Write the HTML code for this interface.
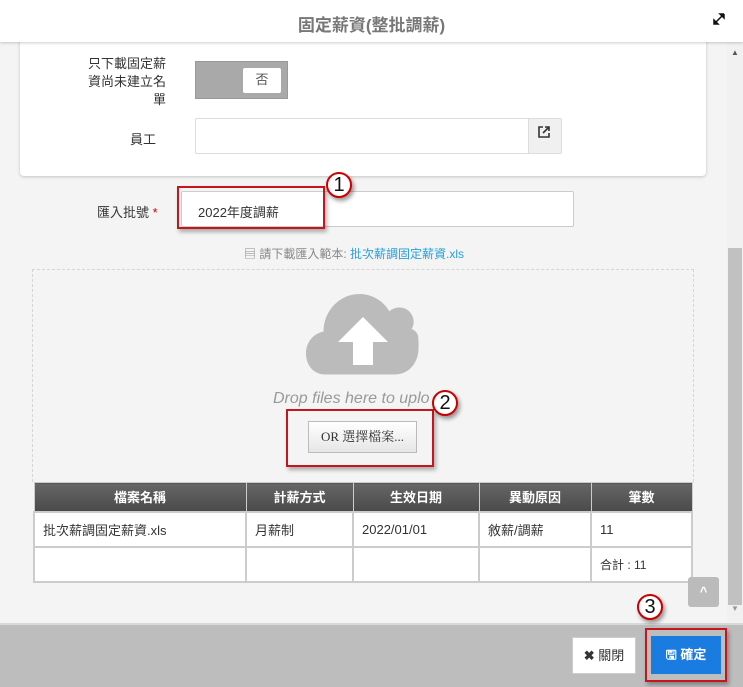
<!DOCTYPE html>
<html><head><meta charset="utf-8"><style>
*{box-sizing:border-box;margin:0;padding:0}
body{width:743px;height:687px;overflow:hidden;background:#f4f4f4;font-family:"Liberation Sans","Noto Sans CJK TC",sans-serif;position:relative;font-size:13px;color:#333}
.a{position:absolute}
.circ{position:absolute;width:26px;height:26px;border-radius:50%;background:#fff;border:2px solid #c00;box-shadow:2px 3px 4px rgba(0,0,0,.4);font-size:20px;text-align:center;line-height:22px;color:#111}
.red{position:absolute;border:2px solid #c4161c;box-shadow:2px 3px 4px rgba(0,0,0,.3)}
table{border-collapse:collapse;position:absolute;left:33px;top:482px;width:660px;font-size:13px}
th{background:linear-gradient(#666,#4a4a4a);color:#fff;height:29px;border:1px solid #ccc;font-weight:bold}
td{background:#fff;border:2px solid #ccc;height:35px;padding-left:8px}
</style></head><body>
<div class="a" style="left:0;top:0;width:743px;height:42px;background:#fff;box-shadow:0 1px 3px rgba(0,0,0,.2);z-index:2"></div>
<div class="a" style="left:0;top:11px;width:743px;text-align:center;font-size:17px;font-weight:bold;color:#777;z-index:3">固定薪資(整批調薪)</div>
<svg class="a" style="left:713px;top:13px;z-index:3" width="12" height="12" viewBox="0 0 12 12"><path d="M1 11L11 1M11 1H7l4 4V1M1 11h4L1 7z" stroke="#111" stroke-width="1.5" fill="#111"/></svg>
<div class="a" style="left:20px;top:30px;width:686px;height:146px;background:#fff;border-radius:4px;box-shadow:0 1px 3px rgba(0,0,0,.2)"></div>
<div class="a" style="left:70px;top:55px;width:96px;text-align:right;line-height:18px">只下載固定薪<br>資尚未建立名<br>單</div>
<div class="a" style="left:195px;top:61px;width:93px;height:38px;background:#a9a9a9;border:1px solid #999"></div>
<div class="a" style="left:243px;top:68px;width:38px;height:25px;background:#fff;border-radius:2px;text-align:center;line-height:24px;color:#555">否</div>
<div class="a" style="left:130px;top:129px">員工</div>
<div class="a" style="left:195px;top:118px;width:367px;height:36px;background:#fff;border:1px solid #ddd;border-radius:2px"></div>
<div class="a" style="left:528px;top:119px;width:33px;height:34px;background:#f0f0f0;border-left:1px solid #ddd"></div>
<svg class="a" style="left:537px;top:125px" width="14" height="14" viewBox="0 0 14 14"><path d="M6 2H2v10h10V8M8 2h4v4M12 2L6 8" fill="none" stroke="#333" stroke-width="1.6"/></svg>
<div class="a" style="left:97px;top:202px">匯入批號<span style="color:#c00"> *</span></div>
<div class="a" style="left:181px;top:191px;width:393px;height:36px;background:#fff;border:1px solid #ccc;border-radius:2px"></div>
<div class="a" style="left:198px;top:202px;font-size:13px">2022年度調薪</div>
<div class="red" style="left:177px;top:186px;width:148px;height:43px"></div>
<div class="circ" style="left:326px;top:172px">1</div>
<div class="a" style="left:244px;top:245px;font-size:12px;color:#888">▤ 請下載匯入範本: <span style="color:#2a9fd6">批次薪調固定薪資.xls</span></div>
<div class="a" style="left:32px;top:269px;width:662px;height:213px;border:1px dashed #d5d5d5;border-bottom:none"></div>
<svg class="a" style="left:305px;top:292px" width="116" height="86" viewBox="0 0 116 86"><path d="M20 84C8 84 0 75 0 62c0-12 9-21 18-22C18 18 35 1 55 1c15 0 26 9 31 18 3-3 7-4 10-4 9 0 15 7 15 15 0 3-1 5-2 7 8 4 7 9 7 20 0 15-10 27-24 27z" fill="#bbb" transform="translate(1 1) scale(.97)"/><path d="M58 25L33 50h15v23h20V50h15z" fill="#fff"/></svg>
<div class="a" style="left:273px;top:390px;font-size:16px;font-style:italic;color:#999">Drop files here to uplo</div>
<div class="a" style="left:308px;top:421px;width:109px;height:32px;background:linear-gradient(#fff,#e6e6e6);border:1px solid #bbb;text-align:center;line-height:30px;font-family:'Liberation Serif','Noto Serif CJK SC',serif;font-size:13px">OR 選擇檔案...</div>
<div class="red" style="left:286px;top:409px;width:148px;height:58px"></div>
<div class="circ" style="left:432px;top:390px">2</div>
<table><tr><th style="width:212px">檔案名稱</th><th style="width:107px">計薪方式</th><th style="width:126px">生效日期</th><th style="width:112px">異動原因</th><th>筆數</th></tr>
<tr><td>批次薪調固定薪資.xls</td><td>月薪制</td><td>2022/01/01</td><td>敘薪/調薪</td><td>11</td></tr>
<tr><td></td><td></td><td></td><td></td><td style="font-size:12px">合計 : 11</td></tr></table>
<div class="a" style="left:688px;top:577px;width:31px;height:30px;background:#bbb;border-radius:3px;color:#fff;text-align:center;line-height:30px;font-weight:bold">^</div>
<div class="a" style="left:727px;top:42px;width:16px;height:582px;background:#f1f1f1"></div>
<div class="a" style="left:728px;top:248px;width:14px;height:357px;background:#c1c1c1"></div>
<div class="a" style="left:731px;top:48px;font-size:8px;color:#555">▲</div>
<div class="a" style="left:731px;top:604px;font-size:8px;color:#999">▼</div>
<div class="a" style="left:0;top:623px;width:743px;height:64px;background:#bdbdbd;border-top:2px solid #d8d8d8"></div>
<div class="a" style="left:572px;top:637px;width:64px;height:37px;background:#fff;border:1px solid #ccc;text-align:center;line-height:36px;font-size:13px"><b>✖</b> 關閉</div>
<div class="a" style="left:651px;top:636px;width:70px;height:38px;background:#1a7be0;color:#fff;text-align:center;line-height:38px;font-weight:bold;font-size:13px">🖫 確定</div>
<div class="red" style="left:645px;top:628px;width:82px;height:54px"></div>
<div class="circ" style="left:637px;top:594px">3</div>
</body></html>
